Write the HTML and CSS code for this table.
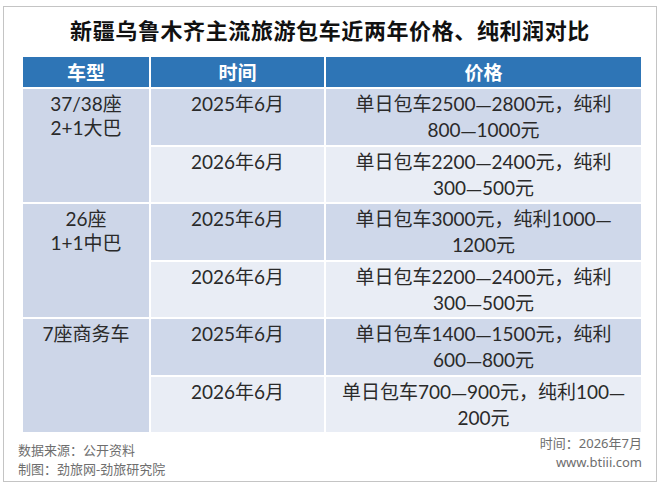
FILE: index.html
```html
<!DOCTYPE html>
<html lang="zh-CN">
<head>
<meta charset="utf-8">
<title>新疆乌鲁木齐主流旅游包车近两年价格、纯利润对比</title>
<link rel="stylesheet" href="styles.css">
</head>
<body>
<div class="frame">
  <h1 class="title">新疆乌鲁木齐主流旅游包车近两年价格、纯利润对比</h1>
  <table class="grid">
    <colgroup>
      <col class="c-type">
      <col class="c-time">
      <col class="c-price">
    </colgroup>
    <thead>
      <tr class="head">
        <th>车型</th>
        <th>时间</th>
        <th>价格</th>
      </tr>
    </thead>
    <tbody>
      <tr class="dark">
        <td class="type" rowspan="2">37/38座<br>2+1大巴</td>
        <td>2025年6月</td>
        <td>单日包车2500<span class="dash">—</span>2800元，纯利<br>800<span class="dash">—</span>1000元</td>
      </tr>
      <tr class="light">
        <td>2026年6月</td>
        <td>单日包车2200<span class="dash">—</span>2400元，纯利<br>300<span class="dash">—</span>500元</td>
      </tr>
      <tr class="dark">
        <td class="type" rowspan="2">26座<br>1+1中巴</td>
        <td>2025年6月</td>
        <td>单日包车3000元，纯利1000<span class="dash">—</span><br>1200元</td>
      </tr>
      <tr class="light">
        <td>2026年6月</td>
        <td>单日包车2200<span class="dash">—</span>2400元，纯利<br>300<span class="dash">—</span>500元</td>
      </tr>
      <tr class="dark">
        <td class="type" rowspan="2">7座商务车</td>
        <td>2025年6月</td>
        <td>单日包车1400<span class="dash">—</span>1500元，纯利<br>600<span class="dash">—</span>800元</td>
      </tr>
      <tr class="light">
        <td>2026年6月</td>
        <td>单日包车700<span class="dash">—</span>900元，纯利100<span class="dash">—</span><br>200元</td>
      </tr>
    </tbody>
  </table>
  <div class="foot">
    <div class="foot-left">
      <div>数据来源：公开资料</div>
      <div>制图：劲旅网-劲旅研究院</div>
    </div>
    <div class="foot-right">
      <div>时间：2026年7月</div>
      <div>www.btiii.com</div>
    </div>
  </div>
</div>
</body>
</html>
```
FILE: styles.css
```css
html, body {
  margin: 0;
  padding: 0;
  background: #ffffff;
}

.frame {
  box-sizing: border-box;
  width: 654px;
  height: 476px;
  margin: 6px 0 0 3px;
  border: 1px solid #c4c4c4;
  background: #ffffff;
}

.title {
  margin: 0;
  height: 48px;
  line-height: 44px;
  text-align: center;
  font-family: "Noto Sans CJK SC", sans-serif;
  font-size: 22px;
  font-weight: 700;
  letter-spacing: 0.6px;
  color: #111111;
}

.grid {
  table-layout: fixed;
  width: 622px;
  margin-left: 17px;
  border-collapse: separate;
  border-spacing: 2px;
  font-family: "Lato", "Noto Sans CJK SC", sans-serif;
  font-size: 19px;
  color: #2a2a2a;
}

.c-type { width: 126px; }
.c-time { width: 173px; }
.c-price { width: 315px; }

.head th {
  height: 30px;
  padding: 0;
  background: #2e75b6;
  color: #ffffff;
  font-family: "Noto Sans CJK SC", sans-serif;
  font-size: 19px;
  font-weight: 700;
  line-height: 30px;
  text-align: center;
}

.grid td {
  height: 55.5px;
  padding: 3px 0 0 0;
  box-sizing: border-box;
  vertical-align: top;
  text-align: center;
  line-height: 24px;
  white-space: nowrap;
}

.dash {
  font-family: "DejaVu Sans", sans-serif;
  font-size: 16px;
}

.dark td { background: #cfd8ea; }
.light td { background: #e9edf5; }
.grid td.type { background: #cdd6e8; }

.foot {
  display: flex;
  justify-content: space-between;
  align-items: flex-start;
  padding: 0 14px;
  font-family: "Noto Sans", "Noto Sans CJK SC", sans-serif;
  font-size: 13px;
  line-height: 19px;
  color: #6e6e6e;
}

.foot-left {
  margin-top: 7px;
}

.foot-right {
  text-align: right;
}
```
